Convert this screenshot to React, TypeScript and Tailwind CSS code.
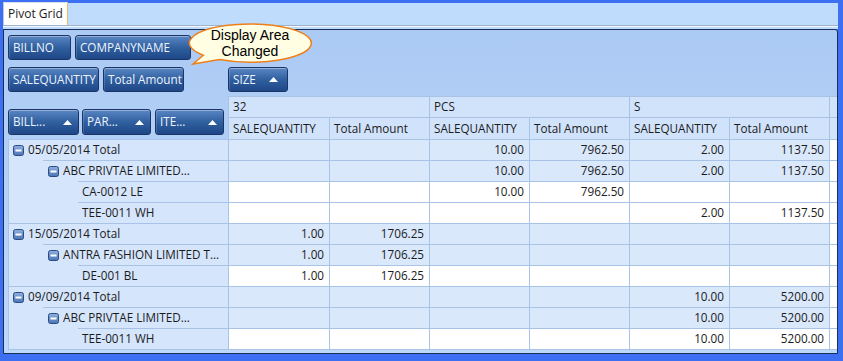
import React from "react";

type Row = {
  level: 1 | 2 | 3;
  label: string;
  vals: string[];
};

const g1 = ["", "", "10.00", "7962.50", "2.00", "1137.50"];
const g2 = ["1.00", "1706.25", "", "", "", ""];
const g3 = ["", "", "", "", "10.00", "5200.00"];

const rows: Row[] = [
  { level: 1, label: "05/05/2014 Total", vals: g1 },
  { level: 2, label: "ABC PRIVTAE LIMITED...", vals: g1 },
  { level: 3, label: "CA-0012 LE", vals: ["", "", "10.00", "7962.50", "", ""] },
  { level: 3, label: "TEE-0011 WH", vals: ["", "", "", "", "2.00", "1137.50"] },
  { level: 1, label: "15/05/2014 Total", vals: g2 },
  { level: 2, label: "ANTRA FASHION LIMITED T...", vals: g2 },
  { level: 3, label: "DE-001 BL", vals: g2 },
  { level: 1, label: "09/09/2014 Total", vals: g3 },
  { level: 2, label: "ABC PRIVTAE LIMITED...", vals: g3 },
  { level: 3, label: "TEE-0011 WH", vals: g3 },
];

function SortArrow() {
  return (
    <svg width="9" height="5" viewBox="0 0 9 5" className="shrink-0">
      <polygon points="0,5 4.5,0 9,5" fill="#ffffff" />
    </svg>
  );
}

function FieldButton({
  label,
  className,
  arrow,
}: {
  label: string;
  className: string;
  arrow?: boolean;
}) {
  return (
    <div
      className={`flex items-center justify-between whitespace-nowrap rounded-[3px] border border-[#1b3666] bg-gradient-to-b from-[#5a86c4] via-[#30609f] to-[#1f4788] pl-[4px] pr-[6px] text-[#eef4ff] shadow-[inset_0_1px_0_rgba(255,255,255,0.35),inset_1px_0_0_rgba(255,255,255,0.15)] ${className}`}
    >
      <span className="leading-none">{label}</span>
      {arrow && <SortArrow />}
    </div>
  );
}

function Minus() {
  return (
    <svg width="11" height="11" viewBox="0 0 11 11" className="shrink-0">
      <defs>
        <linearGradient id="mg" x1="0" y1="0" x2="0" y2="1">
          <stop offset="0" stopColor="#8fb0e0" />
          <stop offset="1" stopColor="#4a74b4" />
        </linearGradient>
      </defs>
      <rect x="0.5" y="0.5" width="10" height="10" rx="2" fill="url(#mg)" stroke="#2b4b80" />
      <rect x="2.5" y="4.5" width="6" height="2" fill="#ffffff" />
    </svg>
  );
}

function RowHead({ row }: { row: Row }) {
  return (
    <div className="flex h-[21px]">
      {row.level === 2 && <div className="w-[34px] shrink-0" />}
      {row.level === 3 && <div className="w-[69px] shrink-0" />}
      <div
        className={`flex flex-1 items-center gap-[4px] overflow-hidden whitespace-nowrap border-t border-[#a9c3e7] ${
          row.level === 2 ? "pl-[5px]" : "pl-[4px]"
        }`}
      >
        {row.level < 3 && <Minus />}
        <span>{row.label}</span>
      </div>
    </div>
  );
}

function DataRow({ row }: { row: Row }) {
  const bg = row.level < 3 ? "bg-[#dae8fc]" : "bg-white";
  return (
    <div className="flex h-[21px] border-t border-[#a9c3e7]">
      {row.vals.map((v, i) => (
        <div
          key={i}
          className={`flex items-center justify-end border-r border-[#a9c3e7] pr-[5px] ${bg} ${
            i === 0 ? "w-[101px]" : "w-[100px]"
          }`}
        >
          {v}
        </div>
      ))}
      <div className="flex-1 bg-white" />
    </div>
  );
}

export default function App() {
  return (
    <div className="relative flex h-[361px] w-[843px] flex-col bg-[#3d6ff3] pb-[7px] pl-[3px] pr-[5px] pt-[3px] font-['Open_Sans',sans-serif] text-[11.7px] text-[#1b1b1b]">
      {/* Tab strip */}
      <div className="flex h-[23px] items-end border-b border-[#9fb3cf] bg-[#c0dcfd]">
        <div className="flex h-[23px] items-center border-l border-r border-t border-l-[#b8c8dc] border-r-[#f1bd55] border-t-[#d8e2ee] bg-white px-[4px] text-[12px]">
          Pivot Grid
        </div>
      </div>
      <div className="h-[1px] bg-[#f2f7ff]" />
      <div className="h-[2px] bg-[#c0dcfd]" />

      {/* Pivot frame */}
      <div className="flex flex-1 flex-col rounded-tr-[3px] border border-[#1a2f56] bg-gradient-to-b from-[#abcaf4] to-[#bed8f9] pl-[4px] pt-[5px]">
        {/* Filter area */}
        <div className="flex h-[25px] gap-[4px]">
          <FieldButton label="BILLNO" className="w-[63px]" />
          <FieldButton label="COMPANYNAME" className="w-[116px]" />
        </div>

        {/* Data + column area */}
        <div className="mt-[7px] flex h-[25px]">
          <div className="flex w-[220px] gap-[4px]">
            <FieldButton label="SALEQUANTITY" className="w-[91px]" />
            <FieldButton label="Total Amount" className="w-[81px]" />
          </div>
          <FieldButton label="SIZE" className="w-[60px] pr-[9px]" arrow />
        </div>

        {/* Grid */}
        <div className="mt-[4px] flex flex-1">
          {/* Row area */}
          <div className="flex w-[220px] flex-col">
            <div className="flex h-[43px] gap-[3px] pt-[13px]">
              <FieldButton label="BILL..." className="h-[26px] w-[71px]" arrow />
              <FieldButton label="PAR..." className="h-[26px] w-[69px]" arrow />
              <FieldButton label="ITE..." className="ml-[1px] h-[26px] w-[69px]" arrow />
            </div>
            <div className="border-b border-l border-[#a9c3e7] bg-[#d5e5fb]">
              {rows.map((r, i) => (
                <RowHead key={i} row={r} />
              ))}
            </div>
          </div>

          {/* Cells */}
          <div className="flex flex-1 flex-col self-start border-l border-[#a9c3e7] bg-white">
            <div className="flex h-[21px] border-t border-[#a9c3e7] bg-[#d1e3fb]">
              {["32", "PCS", "S"].map((c, i) => (
                <div
                  key={c}
                  className={`flex items-center border-r border-[#a9c3e7] pl-[4px] ${
                    i === 0 ? "w-[201px]" : "w-[200px]"
                  }`}
                >
                  {c}
                </div>
              ))}
              <div className="flex-1" />
            </div>
            <div className="flex h-[22px] border-t border-[#a9c3e7] bg-[#d1e3fb]">
              {["SALEQUANTITY", "Total Amount", "SALEQUANTITY", "Total Amount", "SALEQUANTITY", "Total Amount"].map(
                (c, i) => (
                  <div
                    key={i}
                    className={`flex items-center whitespace-nowrap border-r border-[#a9c3e7] pl-[4px] ${
                      i === 0 ? "w-[101px]" : "w-[100px]"
                    }`}
                  >
                    {c}
                  </div>
                )
              )}
              <div className="flex-1" />
            </div>
            <div className="border-b border-[#a9c3e7]">
              {rows.map((r, i) => (
                <DataRow key={i} row={r} />
              ))}
            </div>
          </div>
        </div>
      </div>

      {/* Callout */}
      <div className="absolute left-[186px] top-[22px] h-[46px] w-[130px]">
        <svg width="130" height="46" viewBox="0 0 130 46" className="absolute left-0 top-0">
          <path
            d="M33.5,37.5 A61,19 0 1 0 17.3,33.2 L7,42 Z"
            fill="#fffde2"
            stroke="#ef7f1a"
            strokeWidth="1.5"
          />
        </svg>
        <div className="absolute left-[3px] top-[5px] flex w-[122px] flex-col items-center font-['Liberation_Sans',Arial,sans-serif] text-[14px] leading-[16px] text-black">
          <span>Display Area</span>
          <span>Changed</span>
        </div>
      </div>
    </div>
  );
}
